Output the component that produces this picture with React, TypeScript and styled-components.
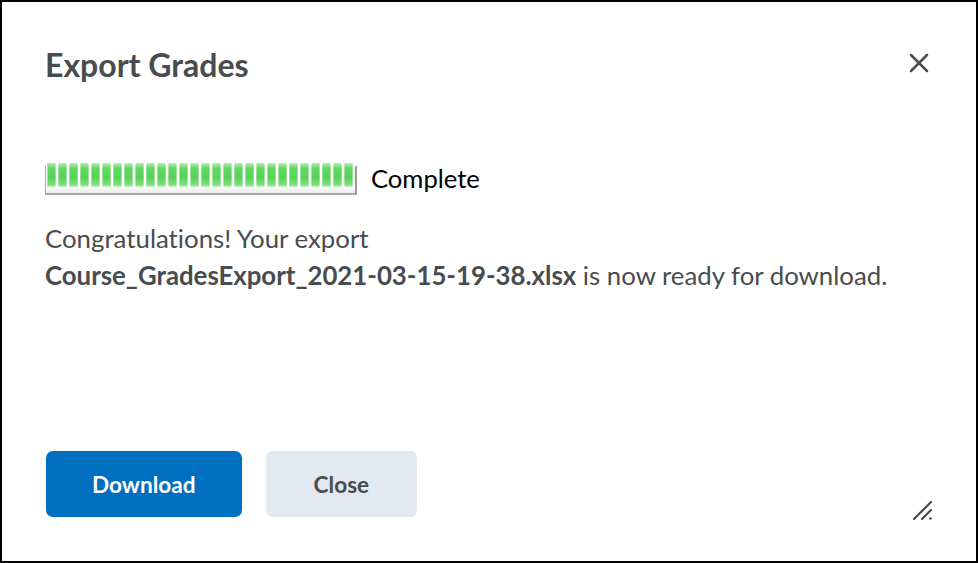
import React from "react";
import styled, { createGlobalStyle } from "styled-components";

const GlobalStyle = createGlobalStyle`
  html, body {
    margin: 0;
    padding: 0;
    background: #ffffff;
  }
  body {
    font-family: Lato, "Open Sans", sans-serif;
    font-variant-ligatures: no-common-ligatures;
  }
`;

const Dialog = styled.div`
  box-sizing: border-box;
  width: 978px;
  height: 563px;
  border: 2px solid #000;
  background: #fff;
  display: flex;
  flex-direction: column;
  padding: 0 0 0 43px;
  color: #494c4e;
`;

const Header = styled.div`
  display: flex;
  align-items: center;
  justify-content: space-between;
  padding-top: 44px;
  padding-right: 46px;
`;

const Title = styled.h2`
  margin: 0;
  font-size: 32px;
  line-height: 38px;
  font-weight: 700;
  color: #494c4e;
`;

const IconButton = styled.button`
  border: none;
  background: none;
  padding: 0;
  width: 22px;
  height: 22px;
  margin-top: -4px;
  display: flex;
  align-items: center;
  justify-content: center;
  cursor: pointer;
`;

const ProgressRow = styled.div`
  display: flex;
  align-items: flex-end;
  gap: 14px;
  margin-top: 79px;
`;

const Track = styled.div`
  box-sizing: border-box;
  width: 312px;
  height: 29px;
  border-left: 1px solid #a8a8a8;
  border-right: 2px solid #9c9c9c;
  border-bottom: 2px solid #a8a8a8;
  background: linear-gradient(to bottom, #ffffff 72%, #ececec 100%);
  display: flex;
  gap: 2px;
  padding-left: 1px;
`;

const Block = styled.div`
  flex: none;
  width: 9px;
  height: 24px;
  margin-top: -3px;
  background: linear-gradient(
    to bottom,
    #b4efb4 0%,
    #62d962 22%,
    #56d356 60%,
    #7fde7f 90%,
    #c8f3c8 100%
  );
  box-shadow: inset 1px 0 0 rgba(255, 255, 255, 0.35),
    inset -1px 0 0 rgba(255, 255, 255, 0.35);
`;

const Status = styled.span`
  font-size: 25.6px;
  line-height: 30px;
  color: #000;
  margin-bottom: 2px;
`;

const Message = styled.p`
  margin: 25px 0 0;
  font-size: 25.8px;
  line-height: 37px;
  color: #494c4e;
`;

const FileName = styled.strong`
  font-weight: 700;
`;

const Footer = styled.div`
  margin-top: auto;
  display: flex;
  align-items: center;
  gap: 24px;
  padding: 0 42px 44px 1px;
`;

const Button = styled.button<{ $primary?: boolean }>`
  height: 66px;
  border: none;
  border-radius: 7px;
  padding: 0 ${(p) => (p.$primary ? "46px" : "48px")};
  font-family: Lato, "Open Sans", sans-serif;
  font-size: 22.6px;
  font-weight: 700;
  background: ${(p) => (p.$primary ? "#006fbf" : "#e3e9f1")};
  color: ${(p) => (p.$primary ? "#ffffff" : "#494c4e")};
  cursor: pointer;
`;

const ResizeGrip = styled.div`
  margin-left: auto;
  align-self: flex-end;
  width: 22px;
  height: 22px;
  margin-bottom: -4px;
`;

const BLOCKS = Array.from({ length: 28 }, (_, i) => i);

function App() {
  return (
    <>
      <GlobalStyle />
      <Dialog>
        <Header>
          <Title>Export Grades</Title>
          <IconButton aria-label="Close">
            <svg width="22" height="22" viewBox="0 0 22 22">
              <path
                d="M3 3 L19 19 M19 3 L3 19"
                stroke="#494c4e"
                strokeWidth="2.5"
                strokeLinecap="round"
              />
            </svg>
          </IconButton>
        </Header>

        <ProgressRow>
          <Track>
            {BLOCKS.map((i) => (
              <Block key={i} />
            ))}
          </Track>
          <Status>Complete</Status>
        </ProgressRow>

        <Message>
          Congratulations! Your export
          <br />
          <FileName>Course_GradesExport_2021-03-15-19-38.xlsx</FileName> is
          now ready for download.
        </Message>

        <Footer>
          <Button $primary>Download</Button>
          <Button>Close</Button>
          <ResizeGrip>
            <svg width="22" height="22" viewBox="0 0 22 22">
              <path
                d="M2 20 L19 3 M10 20 L19 11"
                stroke="#494c4e"
                strokeWidth="2.2"
                strokeLinecap="round"
              />
              <circle cx="18.5" cy="19.5" r="1.3" fill="#494c4e" />
            </svg>
          </ResizeGrip>
        </Footer>
      </Dialog>
    </>
  );
}

export default App;
